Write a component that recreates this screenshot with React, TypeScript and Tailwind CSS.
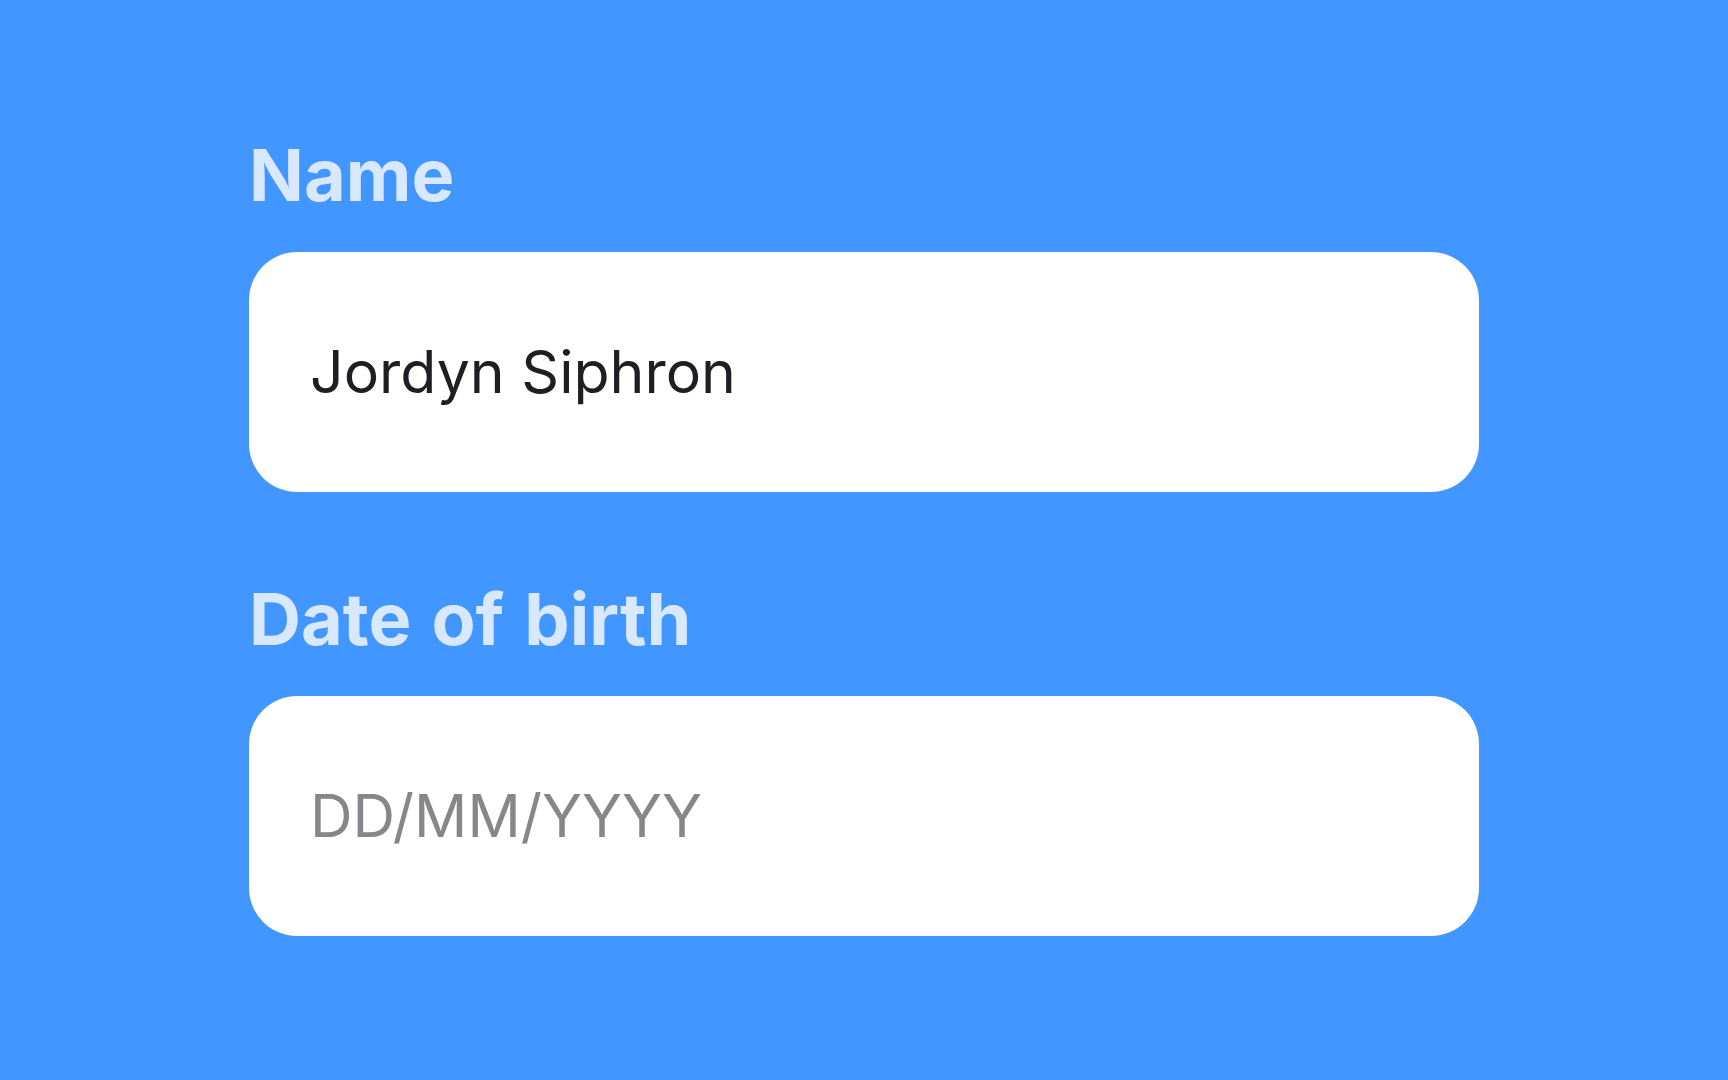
import React from 'react';

function Field({ label, value, placeholder }: { label: string; value?: string; placeholder?: string }) {
  return (
    <div className="flex flex-col">
      <label className="text-[72px] leading-[72px] font-bold text-[#d8e9ff] [word-spacing:3px] mb-[41px]">
        {label}
      </label>
      <div className="w-[1230px] h-[240px] bg-white rounded-[48px] flex items-center px-[61px]">
        <input
          readOnly
          defaultValue={value}
          placeholder={placeholder}
          className="w-full bg-transparent outline-none text-[59px] leading-[72px] text-[#1e1e23] placeholder:text-[#86868b]"
          style={{ fontFamily: 'Inter, "Noto Sans", sans-serif' }}
        />
      </div>
    </div>
  );
}

export default function App() {
  return (
    <div
      className="w-[1728px] h-[1080px] bg-[#4197ff] pt-[139px] pl-[249px] flex flex-col gap-[91px] overflow-hidden"
      style={{ fontFamily: 'Inter, "Noto Sans", sans-serif' }}
    >
      <Field label="Name" value="Jordyn Siphron" />
      <Field label="Date of birth" placeholder="DD/MM/YYYY" />
    </div>
  );
}
